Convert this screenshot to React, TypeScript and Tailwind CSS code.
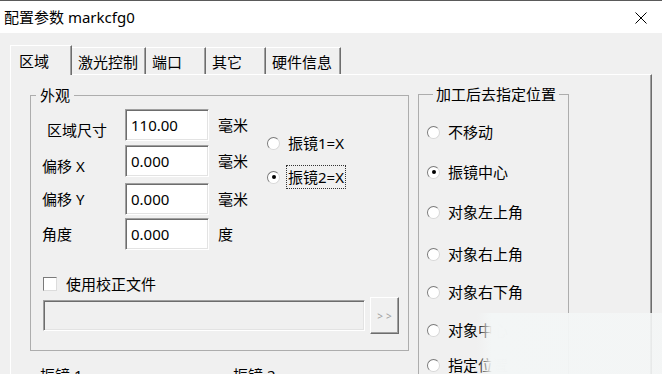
import React from "react";

const sunken =
  "border border-t-[#a0a0a0] border-l-[#a0a0a0] border-r-white border-b-white shadow-[inset_1px_1px_0_#6d6d6d,inset_-1px_-1px_0_#e3e3e3]";

function Radio({ checked }: { checked?: boolean }) {
  return (
    <span className="flex h-[13px] w-[13px] shrink-0 items-center justify-center rounded-full border border-t-[#7a7a7a] border-l-[#7a7a7a] border-r-[#d8d8d8] border-b-[#d8d8d8] bg-white">
      {checked && <span className="h-[4px] w-[4px] rounded-full bg-black" />}
    </span>
  );
}

const fields = [
  { label: "区域尺寸", value: "110.00", unit: "毫米", row: "", labelCls: "pl-[5px] mt-[9px]" },
  { label: "偏移 X", value: "0.000", unit: "毫米", row: "mt-[4px]", labelCls: "mt-[9px]" },
  { label: "偏移 Y", value: "0.000", unit: "毫米", row: "mt-[6px]", labelCls: "" },
  { label: "角度", value: "0.000", unit: "度", row: "mt-[3px]", labelCls: "" },
];

const tabs = [
  { label: "激光控制", w: "w-[74px]" },
  { label: "端口", w: "w-[60px]" },
  { label: "其它", w: "w-[60px]" },
  { label: "硬件信息", w: "w-[75px]" },
];

const targets = [
  { label: "不移动", gap: "mt-[16px]" },
  { label: "振镜中心", gap: "mt-[16px]", checked: true },
  { label: "对象左上角", gap: "mt-[16px]" },
  { label: "对象右上角", gap: "mt-[18px]" },
  { label: "对象右下角", gap: "mt-[14px]" },
  { label: "对象中心", gap: "mt-[14px]" },
  { label: "指定位置", gap: "mt-[11px]" },
];

export default function App() {
  return (
    <div className="relative h-[374px] w-[662px] overflow-hidden bg-[#f0f0f0] font-['Noto_Sans','Noto_Sans_CJK_SC',sans-serif] text-[15px] text-black">
      {/* Title bar */}
      <div className="flex h-[33px] items-center justify-between border-t border-[#5a5a5a] bg-white pl-[4px] pr-[15px]">
        <span className="leading-none">配置参数 markcfg0</span>
        <svg width="12" height="12" viewBox="0 0 12 12" className="mt-[1px]">
          <path d="M0.5 0.5 L11.5 11.5 M11.5 0.5 L0.5 11.5" stroke="#000" strokeWidth="1" />
        </svg>
      </div>

      <div className="pl-[10px] pt-[12px]">
        {/* Tabs */}
        <div className="flex items-end">
          <div className="relative z-10 -mb-px h-[30px] w-[62px] border-l border-t border-white bg-[#f0f0f0] pl-[8px] pt-[5px] leading-[20px] shadow-[inset_-1px_0_0_#a0a0a0] border-r border-r-[#6d6d6d]">
            区域
          </div>
          {tabs.map((t) => (
            <div
              key={t.label}
              className={`${t.w} h-[27px] border-t border-white border-r border-r-[#6d6d6d] pl-[6px] pt-[4px] leading-[20px] shadow-[inset_-1px_0_0_#a0a0a0]`}
            >
              {t.label}
            </div>
          ))}
        </div>

        {/* Panel */}
        <div className="h-[320px] w-[642px] border-l border-t border-white border-r border-r-[#6d6d6d] pl-[19px] pt-[10px] shadow-[inset_-1px_0_0_#a0a0a0]">
          <div className="flex items-start gap-[9px]">
            <div className="flex flex-col">
              <fieldset className="w-[379px] border border-[#adadad] pb-[16px]">
                <legend className="ml-[5px] px-[4px] leading-[20px]">外观</legend>

                <div className="mt-[4px] flex">
                  <div className="flex flex-col pl-[11px]">
                    {fields.map((f) => (
                      <div key={f.label} className={`flex h-[32px] items-center ${f.row}`}>
                        <span className={`w-[83px] leading-[20px] ${f.labelCls}`}>{f.label}</span>
                        <div className={`flex h-[32px] w-[84px] items-center bg-white pl-[5px] ${sunken}`}>
                          <span className="leading-none">{f.value}</span>
                        </div>
                        <span className="ml-[9px] w-[49px] leading-[20px]">{f.unit}</span>
                      </div>
                    ))}
                  </div>

                  <div className="flex flex-col gap-[10px] pt-[22px]">
                    <div className="flex h-[24px] items-center">
                      <Radio />
                      <span className="ml-[6px] flex h-[24px] items-center border border-transparent px-[1px] leading-none">
                        振镜1=X
                      </span>
                    </div>
                    <div className="flex h-[24px] items-center">
                      <Radio checked />
                      <span className="ml-[6px] flex h-[24px] items-center border border-dotted border-[#333] px-[1px] leading-none">
                        振镜2=X
                      </span>
                    </div>
                  </div>
                </div>

                <div className="mt-[24px] flex items-center pl-[12px]">
                  <span className="h-[14px] w-[14px] border border-t-[#7a7a7a] border-l-[#7a7a7a] border-r-[#dcdcdc] border-b-[#dcdcdc] bg-white" />
                  <span className="ml-[9px] leading-[20px]">使用校正文件</span>
                </div>

                <div className="mt-[3px] flex items-center pl-[12px]">
                  <div className={`h-[31px] w-[322px] bg-[#f0f0f0] ${sunken}`} />
                  <div className="ml-[5px] flex h-[37px] w-[29px] items-center justify-center gap-[3px] border border-t-white border-l-white border-r-[#6d6d6d] border-b-[#6d6d6d] shadow-[inset_-1px_-1px_0_#a0a0a0] text-[10px] leading-none text-[#a0a0a0]">
                    <span>&gt;</span>
                    <span>&gt;</span>
                  </div>
                </div>
              </fieldset>

              <div className="mt-[14px] flex pl-[10px] leading-[20px]">
                <span className="w-[193px]">振镜 1</span>
                <span>振镜 2</span>
              </div>
            </div>

            <fieldset className="-mt-px w-[151px] border border-[#adadad] pb-[40px] pl-[8px]">
              <legend className="ml-[6px] px-[3px] leading-[20px]">加工后去指定位置</legend>
              <div className="flex flex-col">
                {targets.map((t) => (
                  <div key={t.label} className={`flex h-[24px] items-center ${t.gap}`}>
                    <Radio checked={t.checked} />
                    <span className="ml-[8px] whitespace-nowrap leading-none">{t.label}</span>
                  </div>
                ))}
              </div>
            </fieldset>
          </div>
        </div>
      </div>

      {/* faded watermark area */}
      <div className="absolute left-[477px] top-[313px] h-[61px] w-[185px] bg-linear-to-r from-[#f3f5f5]/0 via-[#f3f6f6] via-[8%] to-[#f4f6f6]/90" />
    </div>
  );
}
